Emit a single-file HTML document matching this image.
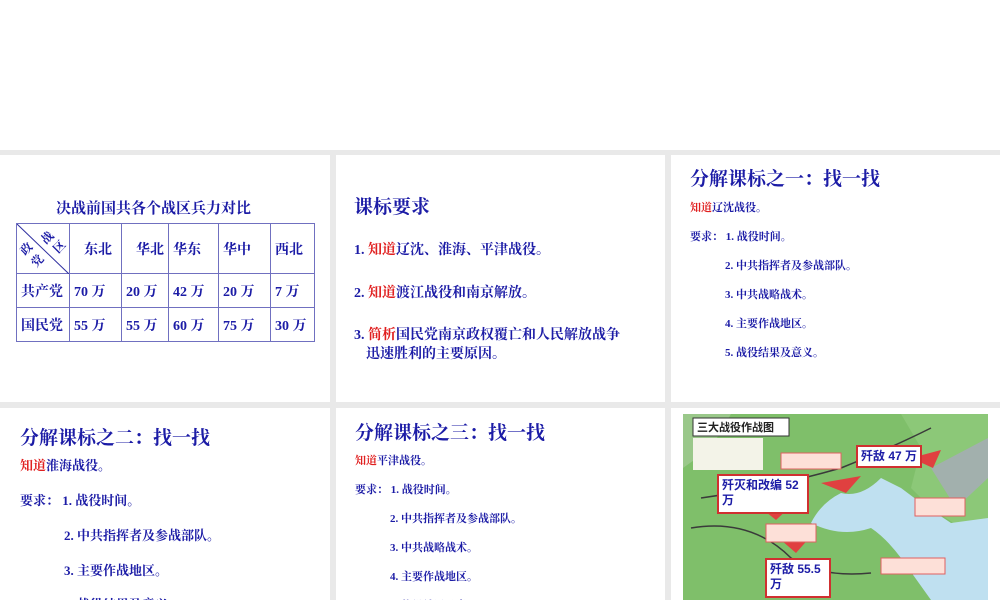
<!DOCTYPE html>
<html><head><meta charset="utf-8"><style>
*{margin:0;padding:0;box-sizing:border-box}
html,body{width:1000px;height:600px;overflow:hidden}
body{background:#e9e9e9;position:relative;font-family:"Liberation Serif","Noto Serif CJK SC",serif;color:#1c1ca6;font-weight:bold}
.top{position:absolute;left:0;top:0;width:1000px;height:150px;background:#fff}
.p{position:absolute;background:#fff;overflow:hidden}
.a{position:absolute;white-space:nowrap}
.r{color:#e02020}
table{border-collapse:collapse;position:absolute;left:16px;top:223px}
td{border:1px solid #7070c0;height:34px;font-size:14px;padding-left:4px;color:#1c1ca6}
.lb{position:absolute;background:#fff;border:2px solid #d03030;font-family:'Liberation Sans','Noto Sans CJK SC',sans-serif;font-size:12px;line-height:15px;color:#1c1ca6;padding:2px 3px;white-space:nowrap}
</style></head><body>
<div class="top"></div>

<div class="p" style="left:0;top:155px;width:330px;height:247px">
<div class="a" style="left:56px;top:42px;font-size:15px">决战前国共各个战区兵力对比</div>
</div>
<table>
<tr style="height:50px"><td style="width:53px;position:relative;padding:0"><svg width="52" height="50" style="position:absolute;left:0;top:0"><line x1="0" y1="0" x2="52" y2="50" stroke="#3030a0" stroke-width="1"/></svg><span style="position:absolute;left:3px;top:16px;font-size:12px;transform:rotate(-45deg)">政</span><span style="position:absolute;left:14px;top:28px;font-size:12px;transform:rotate(-45deg)">党</span><span style="position:absolute;left:24px;top:5px;font-size:12px;transform:rotate(-45deg)">战</span><span style="position:absolute;left:36px;top:14px;font-size:12px;transform:rotate(-45deg)">区</span></td>
<td style="width:52px;padding-left:14px">东北</td><td style="width:47px;padding-left:14px">华北</td><td style="width:50px">华东</td><td style="width:52px">华中</td><td style="width:44px">西北</td></tr>
<tr><td>共产党</td><td>70 万</td><td>20 万</td><td>42 万</td><td>20 万</td><td>7 万</td></tr>
<tr><td>国民党</td><td>55 万</td><td>55 万</td><td>60 万</td><td>75 万</td><td>30 万</td></tr>
</table>

<div class="p" style="left:336px;top:155px;width:329px;height:247px">
<div class="a" style="left:18px;top:37px;font-size:19px">课标要求</div>
<div class="a" style="left:18px;top:84px;font-size:14px">1. <span class="r">知道</span>辽沈、淮海、平津战役。</div>
<div class="a" style="left:18px;top:127px;font-size:14px">2. <span class="r">知道</span>渡江战役和南京解放。</div>
<div class="a" style="left:18px;top:169px;font-size:14px">3. <span class="r">简析</span>国民党南京政权覆亡和人民解放战争</div>
<div class="a" style="left:30px;top:188px;font-size:14px">迅速胜利的主要原因。</div>
</div>

<div class="p" style="left:671px;top:155px;width:329px;height:247px">
<div class="a" style="left:19px;top:9px;font-size:19px">分解课标之一：找一找</div>
<div class="a" style="left:19px;top:44px;font-size:11px"><span class="r">知道</span>辽沈战役。</div>
<div class="a" style="left:19px;top:73px;font-size:11px">要求： 1. 战役时间。</div>
<div class="a" style="left:54px;top:102px;font-size:11px">2. 中共指挥者及参战部队。</div>
<div class="a" style="left:54px;top:131px;font-size:11px">3. 中共战略战术。</div>
<div class="a" style="left:54px;top:160px;font-size:11px">4. 主要作战地区。</div>
<div class="a" style="left:54px;top:189px;font-size:11px">5. 战役结果及意义。</div>
</div>

<div class="p" style="left:0;top:408px;width:330px;height:192px">
<div class="a" style="left:20px;top:15px;font-size:19px">分解课标之二：找一找</div>
<div class="a" style="left:20px;top:47px;font-size:13px"><span class="r">知道</span>淮海战役。</div>
<div class="a" style="left:20px;top:82px;font-size:13px">要求： 1. 战役时间。</div>
<div class="a" style="left:64px;top:117px;font-size:13px">2. 中共指挥者及参战部队。</div>
<div class="a" style="left:64px;top:152px;font-size:13px">3. 主要作战地区。</div>
<div class="a" style="left:64px;top:186px;font-size:13px">4. 战役结果及意义。</div>
</div>

<div class="p" style="left:336px;top:408px;width:329px;height:192px">
<div class="a" style="left:19px;top:10px;font-size:19px">分解课标之三：找一找</div>
<div class="a" style="left:19px;top:44px;font-size:11px"><span class="r">知道</span>平津战役。</div>
<div class="a" style="left:19px;top:73px;font-size:11px">要求： 1. 战役时间。</div>
<div class="a" style="left:54px;top:102px;font-size:11px">2. 中共指挥者及参战部队。</div>
<div class="a" style="left:54px;top:131px;font-size:11px">3. 中共战略战术。</div>
<div class="a" style="left:54px;top:160px;font-size:11px">4. 主要作战地区。</div>
<div class="a" style="left:54px;top:189px;font-size:11px">5. 战役结果及意义。</div>
</div>

<div class="p" style="left:671px;top:408px;width:329px;height:192px">
<svg width="329" height="192" style="position:absolute;left:0;top:0">
<rect x="12" y="6" width="305" height="186" fill="#7fbf6a"/>
<path d="M12 6 L60 6 L40 40 L12 60Z" fill="#9ac88a"/>
<path d="M230 6 L317 6 L317 110 L290 120 L260 100 L240 80 L250 40Z" fill="#8cc878"/>
<path d="M210 70 Q190 90 170 85 Q150 95 140 115 Q170 130 200 120 Q215 130 230 150 L260 192 L317 192 L317 110 L280 115 L250 95 L230 80Z" fill="#bfe0f0"/>
<path d="M260 60 L317 30 L317 70 L285 100Z" fill="#b0a0d0" opacity=".6"/>
<path d="M20 120 Q80 110 120 150 Q150 170 200 165" stroke="#3a3a3a" fill="none" stroke-width="1.5"/>
<path d="M30 90 Q100 80 170 60 Q220 40 260 20" stroke="#3a3a3a" fill="none" stroke-width="1.5"/>
<rect x="22" y="10" width="96" height="18" fill="#fff" stroke="#333"/>
<text x="26" y="23" font-size="11" fill="#222" font-family="Noto Sans CJK SC">三大战役作战图</text>
<rect x="22" y="30" width="70" height="32" fill="#f3f3e8"/>
<path d="M240 50 L270 42 L262 60Z M150 75 L190 68 L175 85Z M90 100 L120 98 L105 112Z M110 132 L140 128 L125 145Z" fill="#e04040"/>
<rect x="95" y="116" width="50" height="18" fill="#fde0d8" stroke="#e06060"/>
<rect x="244" y="90" width="50" height="18" fill="#fde0d8" stroke="#e06060"/>
<rect x="210" y="150" width="64" height="16" fill="#fde0d8" stroke="#e06060"/>
<rect x="110" y="45" width="60" height="16" fill="#fde0d8" stroke="#e06060"/>
</svg>
<div class="lb" style="left:185px;top:37px">歼敌 47 万</div>
<div class="lb" style="left:46px;top:66px;width:92px;height:40px">歼灭和改编 52<br>万</div>
<div class="lb" style="left:94px;top:150px;width:66px;height:40px">歼敌 55.5<br>万</div>
</div>
</body></html>
